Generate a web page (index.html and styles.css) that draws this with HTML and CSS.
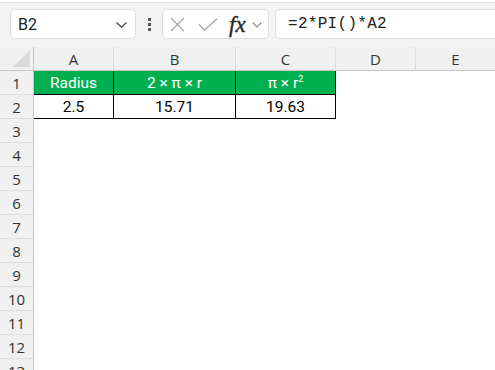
FILE: index.html
```html
<!DOCTYPE html>
<html>
<head>
<meta charset="utf-8">
<link rel="stylesheet" href="styles.css">
</head>
<body>
<div class="top"></div>
<div class="toolbar">
  <div class="namebox">
    <span class="ref">B2</span>
    <svg class="chev" width="11" height="6" viewBox="0 0 11 6"><path d="M0.5 0.5 L5.5 5.2 L10.5 0.5" fill="none" stroke="#444" stroke-width="1.3"/></svg>
  </div>
  <div class="dots"><i></i><i></i><i></i></div>
  <div class="fxbox">
    <svg class="ic-x" width="15" height="15" viewBox="0 0 15 15"><path d="M1 1 L14 14 M14 1 L1 14" stroke="#a6a6a6" stroke-width="1.3" fill="none"/></svg>
    <svg class="ic-ok" width="20" height="13" viewBox="0 0 20 13"><path d="M1 6.5 L6.5 12 L19 0.7" stroke="#a6a6a6" stroke-width="1.3" fill="none"/></svg>
    <span class="fx">fx</span>
    <svg class="chev2" width="10" height="6" viewBox="0 0 10 6"><path d="M0.5 0.5 L5 5 L9.5 0.5" fill="none" stroke="#8a8a8a" stroke-width="1.1"/></svg>
  </div>
  <div class="formula">=2*PI()*A2</div>
</div>
<div class="sheet">
  <div class="corner"><span class="tri"></span></div>
  <div class="ch">A</div><div class="ch">B</div><div class="ch">C</div><div class="ch">D</div><div class="ch">E</div>

  <div class="rh">1</div>
  <div class="c t hd">Radius</div><div class="c t hd">2 × π × r</div><div class="c t hd">π × r<sup>2</sup></div><div class="c"></div><div class="c"></div>

  <div class="rh">2</div>
  <div class="c t">2.5</div><div class="c t">15.71</div><div class="c t">19.63</div><div class="c"></div><div class="c"></div>

  <div class="rh">3</div><div class="c"></div><div class="c"></div><div class="c"></div><div class="c"></div><div class="c"></div>
  <div class="rh">4</div><div class="c"></div><div class="c"></div><div class="c"></div><div class="c"></div><div class="c"></div>
  <div class="rh">5</div><div class="c"></div><div class="c"></div><div class="c"></div><div class="c"></div><div class="c"></div>
  <div class="rh">6</div><div class="c"></div><div class="c"></div><div class="c"></div><div class="c"></div><div class="c"></div>
  <div class="rh">7</div><div class="c"></div><div class="c"></div><div class="c"></div><div class="c"></div><div class="c"></div>
  <div class="rh">8</div><div class="c"></div><div class="c"></div><div class="c"></div><div class="c"></div><div class="c"></div>
  <div class="rh">9</div><div class="c"></div><div class="c"></div><div class="c"></div><div class="c"></div><div class="c"></div>
  <div class="rh">10</div><div class="c"></div><div class="c"></div><div class="c"></div><div class="c"></div><div class="c"></div>
  <div class="rh">11</div><div class="c"></div><div class="c"></div><div class="c"></div><div class="c"></div><div class="c"></div>
  <div class="rh">12</div><div class="c"></div><div class="c"></div><div class="c"></div><div class="c"></div><div class="c"></div>
  <div class="rh">13</div><div class="c"></div><div class="c"></div><div class="c"></div><div class="c"></div><div class="c"></div>
</div>
</body>
</html>
```
FILE: styles.css
```css
* { box-sizing: border-box; }
html, body {
  margin: 0;
  padding: 0;
  width: 495px;
  height: 370px;
  overflow: hidden;
  background: #f3f3f3;
  font-family: Roboto, "Liberation Sans", sans-serif;
}
.top {
  height: 3px;
  background: #fafafa;
  border-bottom: 1px solid #e4e4e4;
}
.toolbar {
  height: 44px;
  display: flex;
  align-items: flex-start;
  padding: 6px 0 0 10px;
}
.namebox {
  width: 126px;
  height: 30px;
  background: #fff;
  border: 1px solid #dcdcdc;
  border-radius: 5px;
  display: flex;
  align-items: center;
  padding: 0 8px 0 7px;
}
.ref {
  flex: 1;
  font-size: 16px;
  color: #222;
}
.chev { margin-top: 2px; }
.dots {
  width: 26px;
  height: 30px;
  display: flex;
  flex-direction: column;
  align-items: center;
  justify-content: center;
  gap: 2px;
}
.dots i {
  display: block;
  width: 3px;
  height: 3px;
  background: #555;
}
.fxbox {
  width: 107px;
  height: 30px;
  background: #fff;
  border: 1px solid #dcdcdc;
  border-radius: 5px;
  display: flex;
  align-items: center;
  padding: 0 0 0 7px;
}
.ic-x { margin-right: 13px; }
.ic-ok { margin-right: 11px; margin-top: 1px; }
.fx {
  font-family: "Liberation Serif", "DejaVu Serif", serif;
  font-style: italic;
  font-size: 23px;
  color: #2a2a2a;
  margin-right: 6px;
  line-height: 1;
  -webkit-text-stroke: 0.4px #2a2a2a;
}
.chev2 { margin-top: 2px; }
.formula {
  margin-left: 6px;
  flex: 1;
  height: 30px;
  background: #fff;
  border: 1px solid #dcdcdc;
  border-right: none;
  border-radius: 5px 0 0 5px;
  display: flex;
  align-items: center;
  padding-left: 12px;
  font-family: "Liberation Mono", "DejaVu Sans Mono", monospace;
  font-size: 16px;
  letter-spacing: 0.3px;
  color: #222;
}
.sheet {
  display: grid;
  grid-template-columns: 34px 80px 122px 100px 80px 80px;
  grid-auto-rows: 24px;
  background: #fff;
}
.corner {
  background: #f0f0f0;
  border-right: 1px solid #c6c6c6;
  border-bottom: 1px solid #c6c6c6;
  display: flex;
  align-items: flex-end;
  justify-content: flex-end;
  padding: 0 3px 3px 0;
}
.tri {
  width: 0;
  height: 0;
  border-left: 17px solid transparent;
  border-bottom: 17px solid #dadada;
}
.ch {
  background: #f0f0f0;
  border-right: 1px solid #dcdcdc;
  border-bottom: 1px solid #c6c6c6;
  display: flex;
  align-items: center;
  justify-content: center;
  font-family: "Open Sans", "Noto Sans", sans-serif;
  font-size: 15px;
  color: #333;
}
.rh {
  background: #f0f0f0;
  border-right: 1px solid #c6c6c6;
  border-bottom: 1px solid #dcdcdc;
  display: flex;
  align-items: center;
  justify-content: center;
  font-family: "Open Sans", "Noto Sans", sans-serif;
  font-size: 15px;
  color: #333;
}
.c {
  background: #fff;
  display: flex;
  align-items: center;
  justify-content: center;
  font-size: 15.5px;
  color: #000;
  border-right: 1px solid transparent;
  border-bottom: 1px solid transparent;
}
.c.t {
  border-right: 1px solid #000;
  border-bottom: 1px solid #000;
}
.c.hd {
  background: #00b050;
  color: #fff;
}
.c.hd sup {
  font-size: 9px;
  position: relative;
  top: -4px;
  vertical-align: top;
}
```
